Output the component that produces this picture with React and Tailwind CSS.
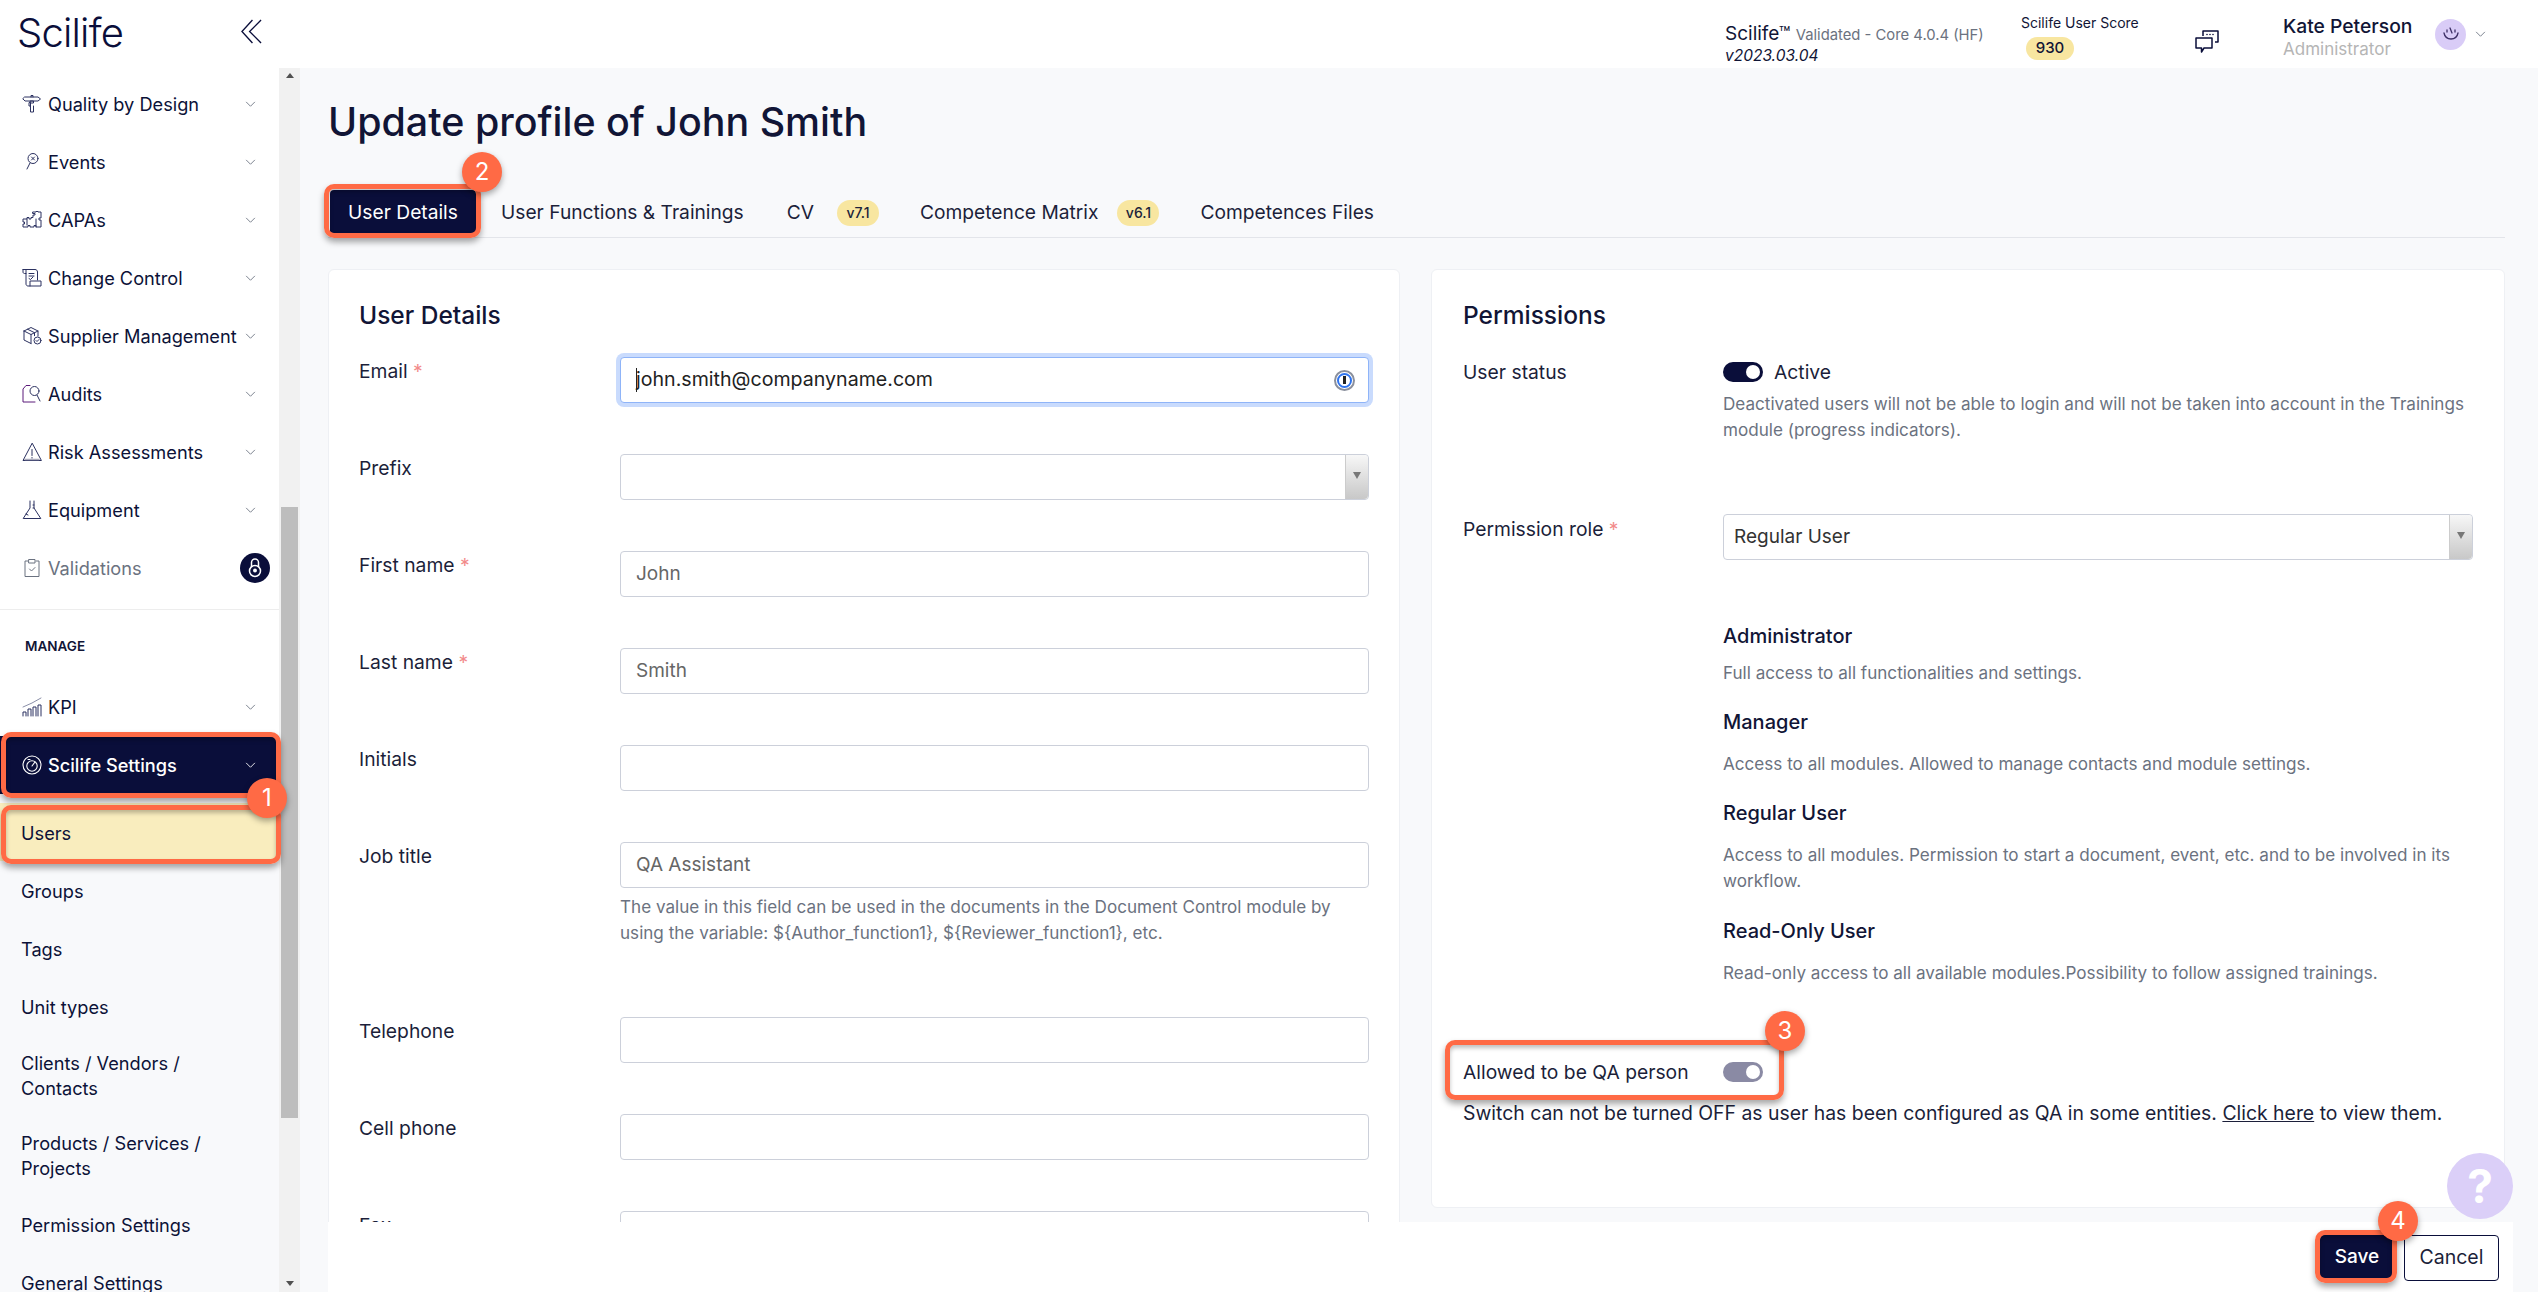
import React from "react";

const S = ({ children, className = "w-5 h-5" }) => (
  <svg viewBox="0 0 20 20" fill="none" stroke="#2b3160" strokeWidth="1" strokeLinecap="round" strokeLinejoin="round" className={className}>{children}</svg>
);

const Icons = {
  sign: <S><path d="M9 3V1.500h2V3M3 3h13l2.500 2-2.500 2H3L1 5zM8.500 7h3v2h-3zM8.500 9v3H7V9zM8.500 12v6h3v-6" /></S>,
  event: <S><circle cx="11" cy="6.500" r="5" /><path d="M9.500 5l3 3M12.500 5l-3 3M8 11l-3 6" /></S>,
  puzzle: <S><path d="M11 2h3v-.5h2V2h3v6h-2v2h2v7h-5v-1.500h-2V17H8v-1.500H6V17H1v-3h1.500v-2H1V9h4v-1.500h2V9h2V7.500H11V5h2V3.500H11zM14 9v8M5 9v6" /></S>,
  change: <S><path d="M1 1.500h12c1.500 0 2.500 1 2.500 2.500v8M1 1.500V4c0 .8.500 1.500 1.500 1.500H4M4 1.500V16c0 1 .8 2 2 2h13v-5H8v5" /><path d="M7 5.500h5M7 8h5M7 10.500l1.500 1 2.500-2.500" /></S>,
  package: <S><path d="M2 5l7-3.500L16 5v5M2 5v9l7 3.500M2 5l7 3.500L16 5M9 8.500v9M5.500 3.200l7 3.500v3" /><circle cx="15.500" cy="14.500" r="3.500" /><path d="M14 14.500l1 1 2-2" /></S>,
  audit: <S><path d="M8 1.500H4L1 5v13h12" stroke="#5b1a7a" /><circle cx="12.500" cy="7" r="4.500" /><path d="M15 11l3 6" /></S>,
  risk: <S><path d="M10 1.500L1 18.500h18z" /><path d="M10 7.500v6M10 15.500v.6" /><path d="M3 17.500h14" stroke="#aab" strokeWidth="1.500" /></S>,
  flask: <S><path d="M8 1v7L1.200 18.500h17.600L12 8V1" /><path d="M11 5h1M11 8h1M4 14l2 1" /></S>,
  clip: <S className="w-5 h-5"><path d="M6 3H3v15.500h14V3h-3M7 1.500h6V5H7zM7.500 11l2 2 3.500-3.500" stroke="#6b7280" /></S>,
  kpi: <S><path d="M1 19v-4h3v4M6 19v-7h3v7M11 19v-9h3v9M16 19V8h3v11" /><path d="M1 10L10 6l9-5" stroke="#8a8fa8" /></S>,
  gauge: (
    <svg viewBox="0 0 20 20" fill="none" stroke="#fff" strokeWidth="1.100" strokeLinecap="round" className="w-5 h-5">
      <circle cx="10" cy="10" r="9" /><circle cx="10" cy="11" r="5.200" /><path d="M10 11l3-4M6 4.500h2" />
    </svg>
  ),
};

const Chevron = ({ color = "#6b7280" }) => (
  <svg viewBox="0 0 12 8" fill="none" stroke={color} strokeWidth="1" className="w-[11px] h-[7px] shrink-0"><path d="M1 1l5 5 5-5" /></svg>
);

const NavRow = ({ icon, label, muted }) => (
  <div className="h-[58px] shrink-0 flex items-center pl-[22px] pr-[23px]">
    <span className="w-[26px] shrink-0 flex">{icon}</span>
    <span className={`text-[18.200px] pt-[2px] flex-1 whitespace-nowrap ${muted ? "text-[#6b7280]" : "text-[#0c1238]"}`}>{label}</span>
    <Chevron />
  </div>
);

const SubRow = ({ label, className = "h-[58px]" }) => (
  <div className={`${className} shrink-0 flex items-center pt-[3px] pl-[21px] pr-[40px] text-[18.200px] leading-[25px] text-[#0c1238]`}>{label}</div>
);

const Sidebar = () => (
  <aside className="w-[300px] shrink-0 flex overflow-hidden">
    <div className="w-[279px] shrink-0 flex flex-col bg-white">
      <div className="pt-[7px] shrink-0">
        <NavRow icon={Icons.sign} label="Quality by Design" />
        <NavRow icon={Icons.event} label="Events" />
        <NavRow icon={Icons.puzzle} label="CAPAs" />
        <NavRow icon={Icons.change} label="Change Control" />
        <NavRow icon={Icons.package} label="Supplier Management" />
        <NavRow icon={Icons.audit} label="Audits" />
        <NavRow icon={Icons.risk} label="Risk Assessments" />
        <NavRow icon={Icons.flask} label="Equipment" />
        <div className="h-[58px] flex items-center pl-[22px] pr-[9px]">
          <span className="w-[26px] shrink-0 flex">{Icons.clip}</span>
          <span className="text-[18.200px] pt-[2px] flex-1 text-[#6b7280]">Validations</span>
          <span className="w-[30px] h-[30px] rounded-full bg-[#0a0e3a] flex items-center justify-center">
            <svg viewBox="0 0 14 20" fill="none" stroke="#fff" strokeWidth="1.500" className="w-[14px] h-[20px]">
              <path d="M3.500 9V4.500a3.500 3.500 0 017 0V9" />
              <circle cx="7" cy="13" r="5.500" />
              <circle cx="7" cy="12.500" r="1.200" fill="#fff" />
            </svg>
          </span>
        </div>
      </div>
      <div className="mt-[12px] shrink-0 border-t border-[#ededed]" />
      <div className="h-[68px] shrink-0 pt-[4px] flex items-center pl-[25px] text-[13.500px] font-semibold text-[#111536]">MANAGE</div>
      <NavRow icon={Icons.kpi} label="KPI" />
      <div className="h-[58px] shrink-0 bg-[#0a0e3a] flex items-center pl-[22px] pr-[23px]">
        <span className="w-[26px] shrink-0 flex">{Icons.gauge}</span>
        <span className="text-[18.200px] pt-[2px] font-medium text-white flex-1">Scilife Settings</span>
        <Chevron color="#fff" />
      </div>
      <div className="flex-1 shrink-0 bg-[#f8f9fb] pt-[9px]">
        <SubRow label="Users" className="h-[58px] bg-[#f9edbe]" />
        <SubRow label="Groups" />
        <SubRow label="Tags" />
        <SubRow label="Unit types" />
        <SubRow label={<span>Clients / Vendors /<br />Contacts</span>} className="h-[78px]" />
        <SubRow label={<span>Products / Services /<br />Projects</span>} className="h-[82px]" />
        <SubRow label="Permission Settings" />
        <SubRow label="General Settings" />
      </div>
    </div>
    <div className="w-[21px] bg-[#f1f1f1] flex flex-col items-center relative">
      <span className="mt-[5px] w-0 h-0 border-x-[4.500px] border-x-transparent border-b-[5px] border-b-[#505050]" />
      <div className="mt-[429px] w-[17px] h-[611px] bg-[#bdbdbd]" />
      <span className="mt-auto mb-[6px] w-0 h-0 border-x-[4.500px] border-x-transparent border-t-[5px] border-t-[#505050]" />
    </div>
  </aside>
);

const Header = () => (
  <header className="h-[68px] bg-white flex items-center shrink-0">
    <div className="w-[300px] shrink-0 flex items-center justify-between pl-[17px] pr-[38px]">
      <span className="text-[40px] font-light leading-none text-[#0a0e3a] tracking-[-0.800px] -mt-[2px]">Scilife</span>
      <svg viewBox="0 0 22 26" fill="none" stroke="#0a0e3a" strokeWidth="1.400" className="w-[21px] h-[25px] -mt-[6px]"><path d="M12 1L1 13l11 12M21 1L9 13l12 12" /></svg>
    </div>
    <div className="flex-1 flex items-center">
      <div className="ml-[1425px] w-[296px] shrink-0 pt-[21px]">
        <div className="leading-[22px] whitespace-nowrap text-[19px] text-[#111536]">Scilife™ <span className="text-[14.800px] text-[#6b7280]">Validated - Core 4.0.4 (HF)</span></div>
        <div className="italic text-[15.500px] leading-[20px] text-[#111536]">v2023.03.04</div>
      </div>
      <div className="w-[165px] shrink-0 pt-[6px]">
        <div className="text-[14px] leading-[18px] text-[#111536] whitespace-nowrap">Scilife User Score</div>
        <div className="mt-[5px] ml-[5px] w-[48px] h-[23px] rounded-full bg-[#f8e6a0] flex items-center justify-center text-[15px] font-medium text-[#111536]">930</div>
      </div>
      <div className="w-[97px] shrink-0 flex pl-[8px] pt-[16px]">
        <svg viewBox="0 0 26 26" fill="none" stroke="#0a0e3a" strokeWidth="1.500" strokeLinejoin="round" className="w-[26px] h-[26px]">
          <path d="M9 7V2h15v11h-3M2 9h16v10h-8l-2.500 4v-4H2z" />
          <path d="M13 5.500v0M16 5.500v0M19 5.500v0" strokeWidth="1.600" strokeLinecap="round" />
        </svg>
      </div>
      <div className="w-[152px] shrink-0 pt-[5px]">
        <div className="text-[19.300px] font-medium leading-[24px] text-[#111536] whitespace-nowrap">Kate Peterson</div>
        <div className="text-[17px] leading-[22px] text-[#b5b5b5]">Administrator</div>
      </div>
      <span className="w-[31px] h-[31px] rounded-full bg-[#d9ccf7] flex items-center justify-center shrink-0">
        <svg viewBox="0 0 20 20" fill="none" stroke="#3d2f66" strokeWidth="1.300" strokeLinecap="round" className="w-5 h-5"><path d="M3 9c1 5 5 6 7 6s6-1 7-6M9 4l2 5M6 6v2M14 6v2" /></svg>
      </span>
      <span className="ml-[9px] flex"><Chevron /></span>
    </div>
  </header>
);

const Label = ({ children, req, className = "" }) => (
  <div className={`text-[19.300px] leading-[28px] text-[#1c1f3a] whitespace-nowrap ${className}`}>
    {children}{req && <span className="text-[#f28b8b]"> *</span>}
  </div>
);

const Input = ({ value }) => (
  <div className="h-[46px] border border-[#ccd0da] rounded-[4px] bg-white px-[15px] flex items-center text-[19px] text-[#666]">{value}</div>
);

const Arrow = () => (
  <div className="ml-auto w-[23px] h-full border-l border-[#ccc] rounded-r-[4px] bg-linear-to-b from-[#f7f7f7] to-[#c8c8c8] flex pt-[17px] justify-center">
    <span className="w-0 h-0 border-x-[4px] border-x-transparent border-t-[7px] border-t-[#777]" />
  </div>
);

const Select = ({ value }) => (
  <div className="h-[46px] border border-[#ccd0da] rounded-[4px] bg-white pl-[10px] flex items-center text-[19px] text-[#333]">
    {value}
    <Arrow />
  </div>
);

const Field = ({ label, req, children, className = "mb-[51px]" }) => (
  <div className={`flex ${className}`}>
    <div className="w-[261px] shrink-0"><Label req={req}>{label}</Label></div>
    <div className="flex-1 min-w-0">{children}</div>
  </div>
);

const Helper = ({ children, className = "" }) => (
  <div className={`text-[17.100px] leading-[26px] text-[#6b7280] ${className}`}>{children}</div>
);

const RoleTitle = ({ children, className }) => (
  <div className={`text-[20px] leading-[26px] font-medium text-[#111536] ${className}`}>{children}</div>
);

const UserDetails = () => (
  <section className="flex-1 min-w-0 bg-white border border-[#eef0f4] rounded-[6px] pt-[29px] px-[30px] h-[1200px]">
    <h2 className="text-[24.500px] leading-[32px] font-medium text-[#111536]">User Details</h2>
    <div className="mt-[26px]">
      <Field label="Email" req>
        <div className="h-[46px] border border-[#8fb4f8] ring-[4px] ring-[#c9dbfd] rounded-[4px] bg-white pl-[15px] pr-[13px] flex items-center text-[19.600px] text-[#222]">
          <span className="w-px h-[24px] bg-[#222] -mr-px" />
          john.smith@companyname.com
          <span className="ml-auto w-[21px] h-[21px] rounded-full border-[2px] border-[#8a8f9c] flex items-center justify-center">
            <span className="w-[15px] h-[15px] rounded-full border-[2px] border-[#2f74ee] bg-white flex items-center justify-center"><span className="w-[3px] h-[8px] bg-[#222]" /></span>
          </span>
        </div>
      </Field>
      <Field label="Prefix"><Select value="" /></Field>
      <Field label="First name" req><Input value="John" /></Field>
      <Field label="Last name" req><Input value="Smith" /></Field>
      <Field label="Initials"><Input value="" /></Field>
      <Field label="Job title" className="mb-[71px]">
        <Input value="QA Assistant" />
        <Helper className="mt-[6px] pr-[10px]">{"The value in this field can be used in the documents in the Document Control module by using the variable: ${Author_function1}, ${Reviewer_function1}, etc."}</Helper>
      </Field>
      <Field label="Telephone"><Input value="" /></Field>
      <Field label="Cell phone"><Input value="" /></Field>
      <Field label="Fax"><Input value="" /></Field>
    </div>
  </section>
);

const Permissions = () => (
  <section className="flex-1 min-w-0 self-start bg-white border border-[#eef0f4] rounded-[6px] pt-[29px] pl-[31px] pr-[31px] pb-[80px]">
    <h2 className="text-[24.500px] leading-[32px] font-medium text-[#111536]">Permissions</h2>
    <div className="mt-[27px] flex">
      <div className="w-[260px] shrink-0"><Label>User status</Label></div>
      <div className="flex-1 min-w-0">
        <div className="flex items-center h-[28px]">
          <span className="w-[40px] h-[20px] rounded-full bg-[#0a0e3a] flex items-center justify-end pr-[3px]"><span className="w-[14px] h-[14px] rounded-full bg-white" /></span>
          <span className="ml-[11px] text-[19.300px] text-[#1c1f3a]">Active</span>
        </div>
        <Helper className="mt-[5px]">Deactivated users will not be able to login and will not be taken into account in the Trainings module (progress indicators).</Helper>
      </div>
    </div>
    <div className="mt-[71px] flex">
      <div className="w-[260px] shrink-0 pt-[1px]"><Label req>Permission role</Label></div>
      <div className="flex-1 min-w-0">
        <Select value="Regular User" />
        <RoleTitle className="mt-[63px]">Administrator</RoleTitle>
        <Helper className="mt-[11px]">Full access to all functionalities and settings.</Helper>
        <RoleTitle className="mt-[23px]">Manager</RoleTitle>
        <Helper className="mt-[16px]">Access to all modules. Allowed to manage contacts and module settings.</Helper>
        <RoleTitle className="mt-[23px]">Regular User</RoleTitle>
        <Helper className="mt-[16px]">Access to all modules. Permission to start a document, event, etc. and to be involved in its workflow.</Helper>
        <RoleTitle className="mt-[24px]">Read-Only User</RoleTitle>
        <Helper className="mt-[16px]">Read-only access to all available modules.Possibility to follow assigned trainings.</Helper>
      </div>
    </div>
    <div className="mt-[72px] flex items-center h-[28px]">
      <div className="w-[260px] shrink-0"><Label>Allowed to be QA person</Label></div>
      <span className="w-[40px] h-[20px] rounded-full bg-[#8a8aa4] flex items-center justify-end pr-[3px]"><span className="w-[14px] h-[14px] rounded-full bg-white" /></span>
    </div>
    <div className="mt-[13px] text-[19.400px] leading-[28px] text-[#1c1f3a] whitespace-nowrap">
      Switch can not be turned OFF as user has been configured as QA in some entities. <a className="underline">Click here</a> to view them.
    </div>
  </section>
);

const Tab = ({ children, badge, gap = "ml-[23px]", className = "" }) => (
  <div className={`flex items-center h-[45px] text-[19.200px] text-[#1c1f3a] whitespace-nowrap ${className}`}>
    {children}
    {badge && <span className={`${gap} w-[42px] h-[26px] rounded-full bg-[#f8e6a0] flex items-center justify-center text-[14px] font-medium`}>{badge}</span>}
  </div>
);

const Main = () => (
  <main className="flex-1 min-w-0 flex flex-col bg-[#f8f9fb]">
    <div className="flex-1 min-h-0 overflow-hidden pl-[28px] pr-[33px] pt-[31px]">
      <h1 className="text-[39.400px] leading-[46px] font-medium text-[#111536] whitespace-nowrap">Update profile of John Smith</h1>
      <div className="mt-[45px] h-[48px] border-b border-[#e3e5ea] flex">
        <div className="ml-[2px] w-[146px] h-[45px] bg-[#0a0e3a] rounded-[4px] flex items-center justify-center text-[19.200px] text-white">User Details</div>
        <Tab className="ml-[25px]">User Functions &amp; Trainings</Tab>
        <Tab className="ml-[43px]" badge="v7.1">CV</Tab>
        <Tab className="ml-[41px]" badge="v6.1" gap="ml-[19px]">Competence Matrix</Tab>
        <Tab className="ml-[41px]">Competences Files</Tab>
      </div>
      <div className="mt-[31px] flex gap-[31px] items-start">
        <UserDetails />
        <Permissions />
      </div>
    </div>
    <footer className="h-[70px] shrink-0 ml-[28px] mr-[25px] bg-white flex items-start justify-end pt-[13px] pr-[14px] gap-[10px]">
      <button className="w-[74px] h-[44px] rounded-[4px] bg-[#0a0e3a] text-white text-[19px] font-medium">Save</button>
      <button className="w-[95px] h-[46px] rounded-[4px] border border-[#0a0e3a] bg-white text-[19.500px] text-[#1c1f3a]">Cancel</button>
    </footer>
  </main>
);

const Box = ({ className }) => (
  <div className={`absolute border-[5px] border-[#ff6a45] rounded-[10px] shadow-[0_4px_6px_rgba(0,0,0,0.35),inset_0_3px_4px_rgba(0,0,0,0.25)] ${className}`} />
);
const Num = ({ n, className }) => (
  <div className={`absolute w-[40px] h-[40px] rounded-full bg-[#ff6a45] text-white flex items-center justify-center text-[24px] shadow-[0_3px_6px_rgba(0,0,0,0.35)] ${className}`}>{n}</div>
);

export default function App() {
  return (
    <div className="relative w-[2538px] h-[1292px] overflow-hidden flex flex-col bg-white font-['Inter','Liberation_Sans',sans-serif]">
      <Header />
      <div className="flex-1 min-h-0 flex">
        <Sidebar />
        <Main />
      </div>
      <Box className="left-[1px] top-[732px] w-[280px] h-[66px]" />
      <Box className="left-[1px] top-[805px] w-[280px] h-[59px]" />
      <Box className="left-[324px] top-[184px] w-[157px] h-[54px]" />
      <Box className="left-[1445px] top-[1040px] w-[339px] h-[60px]" />
      <Box className="left-[2315px] top-[1230px] w-[82px] h-[53px]" />
      <Num n="1" className="left-[247px] top-[778px]" />
      <Num n="2" className="left-[462px] top-[152px]" />
      <Num n="3" className="left-[1765px] top-[1011px]" />
      <Num n="4" className="left-[2378px] top-[1201px]" />
      <div className="absolute left-[2447px] top-[1153px] w-[66px] h-[66px] rounded-full bg-[#dbcff8] flex items-center justify-center text-white text-[46px] font-bold">?</div>
    </div>
  );
}
